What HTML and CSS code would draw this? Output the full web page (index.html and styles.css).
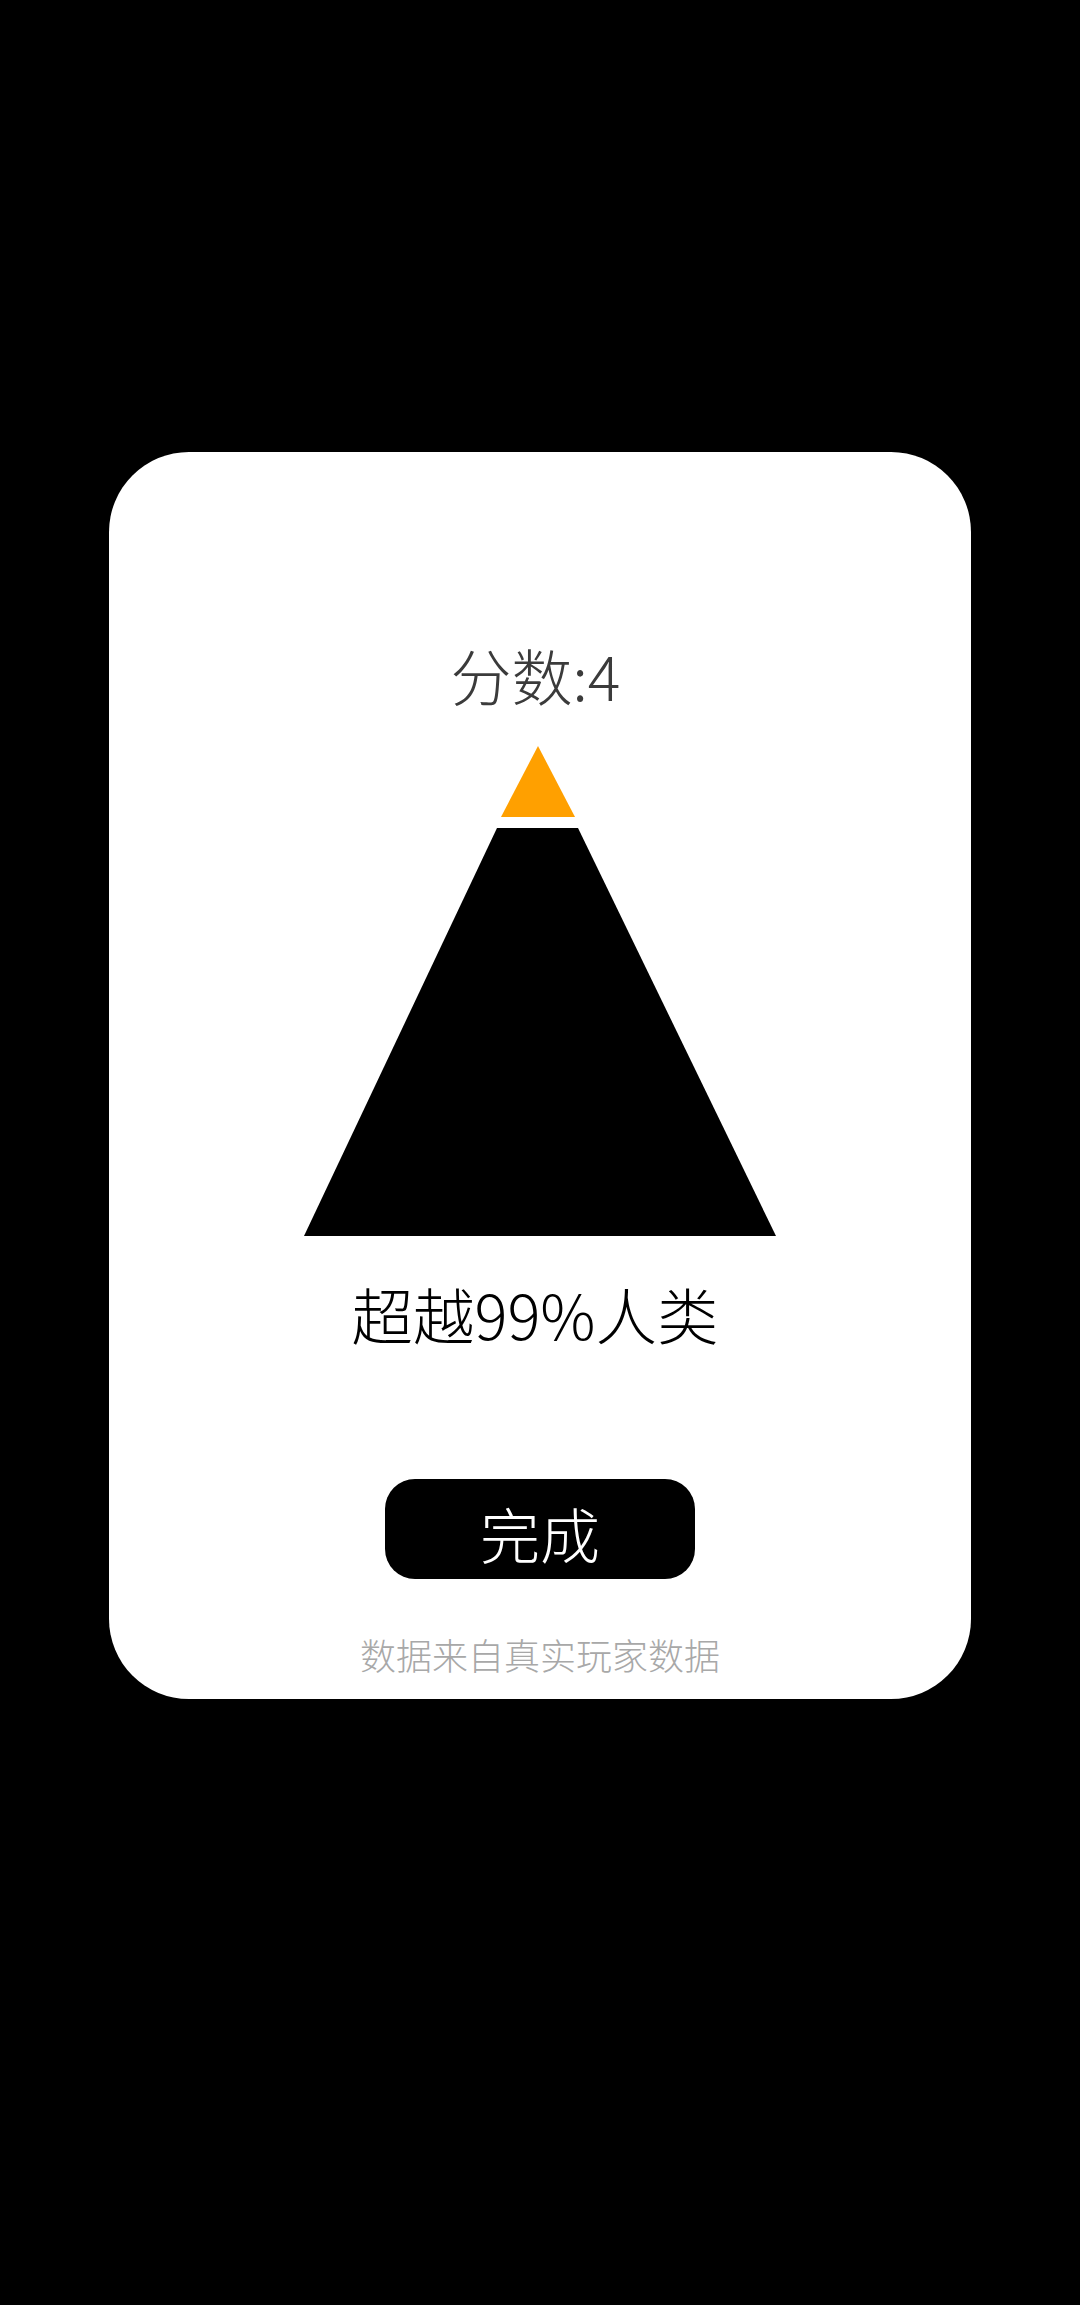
FILE: index.html
```html
<!DOCTYPE html>
<html lang="zh-CN">
<head>
    <meta charset="UTF-8">
    <meta name="viewport" content="width=device-width, initial-scale=1.0">
    <title>分数</title>
    <link rel="stylesheet" href="styles.css">
</head>
<body>
    <div class="card">
        <div class="score">分数:4</div>
        <svg class="pyramid" width="472" height="490" viewBox="0 0 472 490">
            <polygon points="234,0 271,71 197,71" fill="#ffa000"/>
            <polygon points="193,82 274,82 472,490 0,490" fill="#000"/>
        </svg>
        <div class="rank">超越99%人类</div>
        <button class="done">完成</button>
        <div class="note">数据来自真实玩家数据</div>
    </div>
</body>
</html>
```

FILE: styles.css
```css
* {
    margin: 0;
    padding: 0;
    box-sizing: border-box;
}
html, body {
    width: 100%;
    height: 100%;
    background: #000;
    font-family: "Noto Sans CJK SC", "Noto Sans", sans-serif;
}
body {
    padding-top: 452px;
    padding-left: 109px;
}
.card {
    width: 862px;
    height: 1247px;
    background: #fff;
    border-radius: 80px;
    display: flex;
    flex-direction: column;
    align-items: center;
    padding-top: 192px;
}
.score {
    font-size: 61px;
    line-height: 1;
    font-weight: 300;
    color: #3b3b3b;
    margin-right: 9px;
}
.pyramid {
    display: block;
    margin-top: 41px;
}
.rank {
    font-size: 61.5px;
    line-height: 1;
    font-weight: 300;
    color: #000;
    margin-top: 47px;
    margin-right: 10px;
}
.done {
    width: 310px;
    height: 100px;
    margin-top: 134px;
    background: #000;
    color: #fff;
    border: none;
    border-radius: 30px;
    font-family: inherit;
    font-size: 60px;
    font-weight: 200;
    line-height: 1;
    padding-top: 8px;
    display: flex;
    justify-content: center;
    align-items: center;
}
.note {
    margin-top: 57px;
    font-size: 36px;
    line-height: 1;
    font-weight: 300;
    color: #a8a8a8;
}
```
